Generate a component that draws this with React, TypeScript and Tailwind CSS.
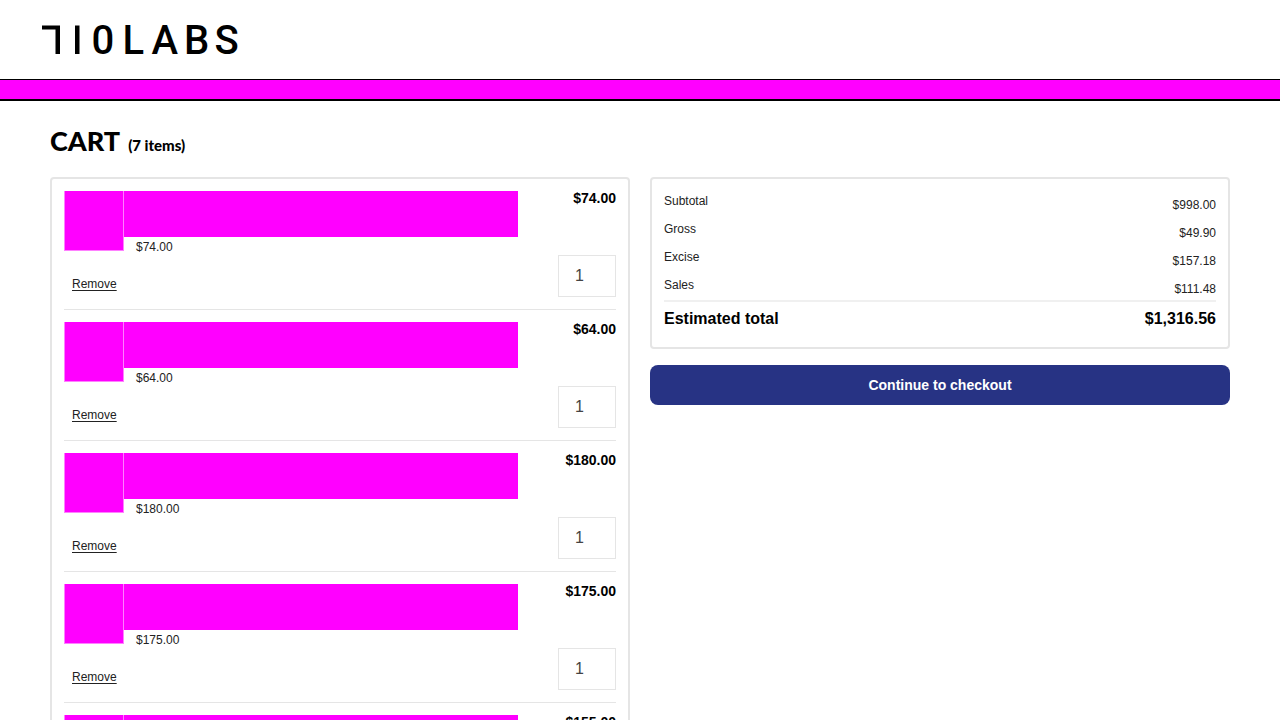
import React from 'react';

type CartItem = { id: number; price: string };
type SummaryLine = { label: string; value: string };

const items: CartItem[] = [
  { id: 1, price: '$74.00' },
  { id: 2, price: '$64.00' },
  { id: 3, price: '$180.00' },
  { id: 4, price: '$175.00' },
  { id: 5, price: '$155.00' },
];

const summary: SummaryLine[] = [
  { label: 'Subtotal', value: '$998.00' },
  { label: 'Gross', value: '$49.90' },
  { label: 'Excise', value: '$157.18' },
  { label: 'Sales', value: '$111.48' },
];

function Logo() {
  return (
    <svg role="img" aria-label="710 Labs" viewBox="0 0 200 32" className="h-8 w-50 overflow-visible" fill="#000">
      <path d="M2 0.5H20V29H15.5V4.5H2Z" />
      <rect x="35" y="0.5" width="4.5" height="28.5" />
      <text y="29" x="51.5 82.5 111.5 144 174.5" fontSize="40" fontWeight="500" fontFamily="Roboto, sans-serif">
        0LABS
      </text>
    </svg>
  );
}

function CartRow({ item }: { item: CartItem }) {
  return (
    <li className="flex justify-between border-b border-[#e5e5e5] pb-3">
      <div className="min-w-0 flex-1">
        <div className="flex items-start">
          <div className="h-15 w-15 shrink-0 border border-t-0 border-[#ff80ff] bg-[#ff00ff]" />
          <div className="flex-1">
            <div className="h-[46px] bg-[#ff00ff]" />
            <p className="pl-3 text-xs leading-5 text-[#222]">{item.price}</p>
          </div>
        </div>
        <a href="#remove" className="ml-2 mt-[17px] inline-block text-xs leading-5 text-[#222] underline underline-offset-2">
          Remove
        </a>
      </div>
      <div className="flex w-[98px] shrink-0 flex-col items-end gap-[50px]">
        <span className="text-sm leading-[14px] font-bold">{item.price}</span>
        <input
          aria-label="Quantity"
          type="text"
          inputMode="numeric"
          defaultValue="1"
          className="h-[42px] w-[58px] border border-[#e5e5e5] px-4 text-base text-[#444] outline-none"
        />
      </div>
    </li>
  );
}

export default function App() {
  return (
    <div className="min-h-screen bg-white font-['Liberation_Sans',Arial,sans-serif] text-black">
      <header>
        <div className="px-10 pt-[25px] pb-[22px]">
          <a href="#home" className="block w-50">
            <Logo />
          </a>
        </div>
        <div className="h-[22px] border-t border-b-2 border-black bg-[#ff00ff]" />
      </header>

      <main className="px-[50px] pt-6">
        <h1 className="mb-4 flex items-baseline gap-2 font-['Lato',sans-serif] text-[27px] leading-8 font-black">
          CART <span className="text-[15px]">(7 items)</span>
        </h1>

        <div className="grid grid-cols-2 items-start gap-5">
          <section aria-label="Cart items" className="rounded border-2 border-[#e5e5e5] p-3">
            <ul className="flex flex-col gap-3">
              {items.map((item) => (
                <CartRow key={item.id} item={item} />
              ))}
            </ul>
          </section>

          <section aria-label="Order summary" className="flex flex-col gap-4">
            <div className="rounded border-2 border-[#e5e5e5] px-3 pt-3 pb-4">
              <dl>
                <div className="flex flex-col gap-1 border-b-2 border-[#f0f0f0] pb-px">
                  {summary.map((line) => (
                    <div key={line.label} className="flex justify-between text-xs leading-5 text-[#222]">
                      <dt>{line.label}</dt>
                      <dd className="pt-1">{line.value}</dd>
                    </div>
                  ))}
                </div>
                <div className="flex justify-between pt-[5px] text-base leading-6 font-bold">
                  <dt>Estimated total</dt>
                  <dd>$1,316.56</dd>
                </div>
              </dl>
            </div>
            <button type="button" className="h-10 w-full rounded-lg bg-[#273384] text-sm font-bold text-white">
              Continue to checkout
            </button>
          </section>
        </div>
      </main>
    </div>
  );
}
